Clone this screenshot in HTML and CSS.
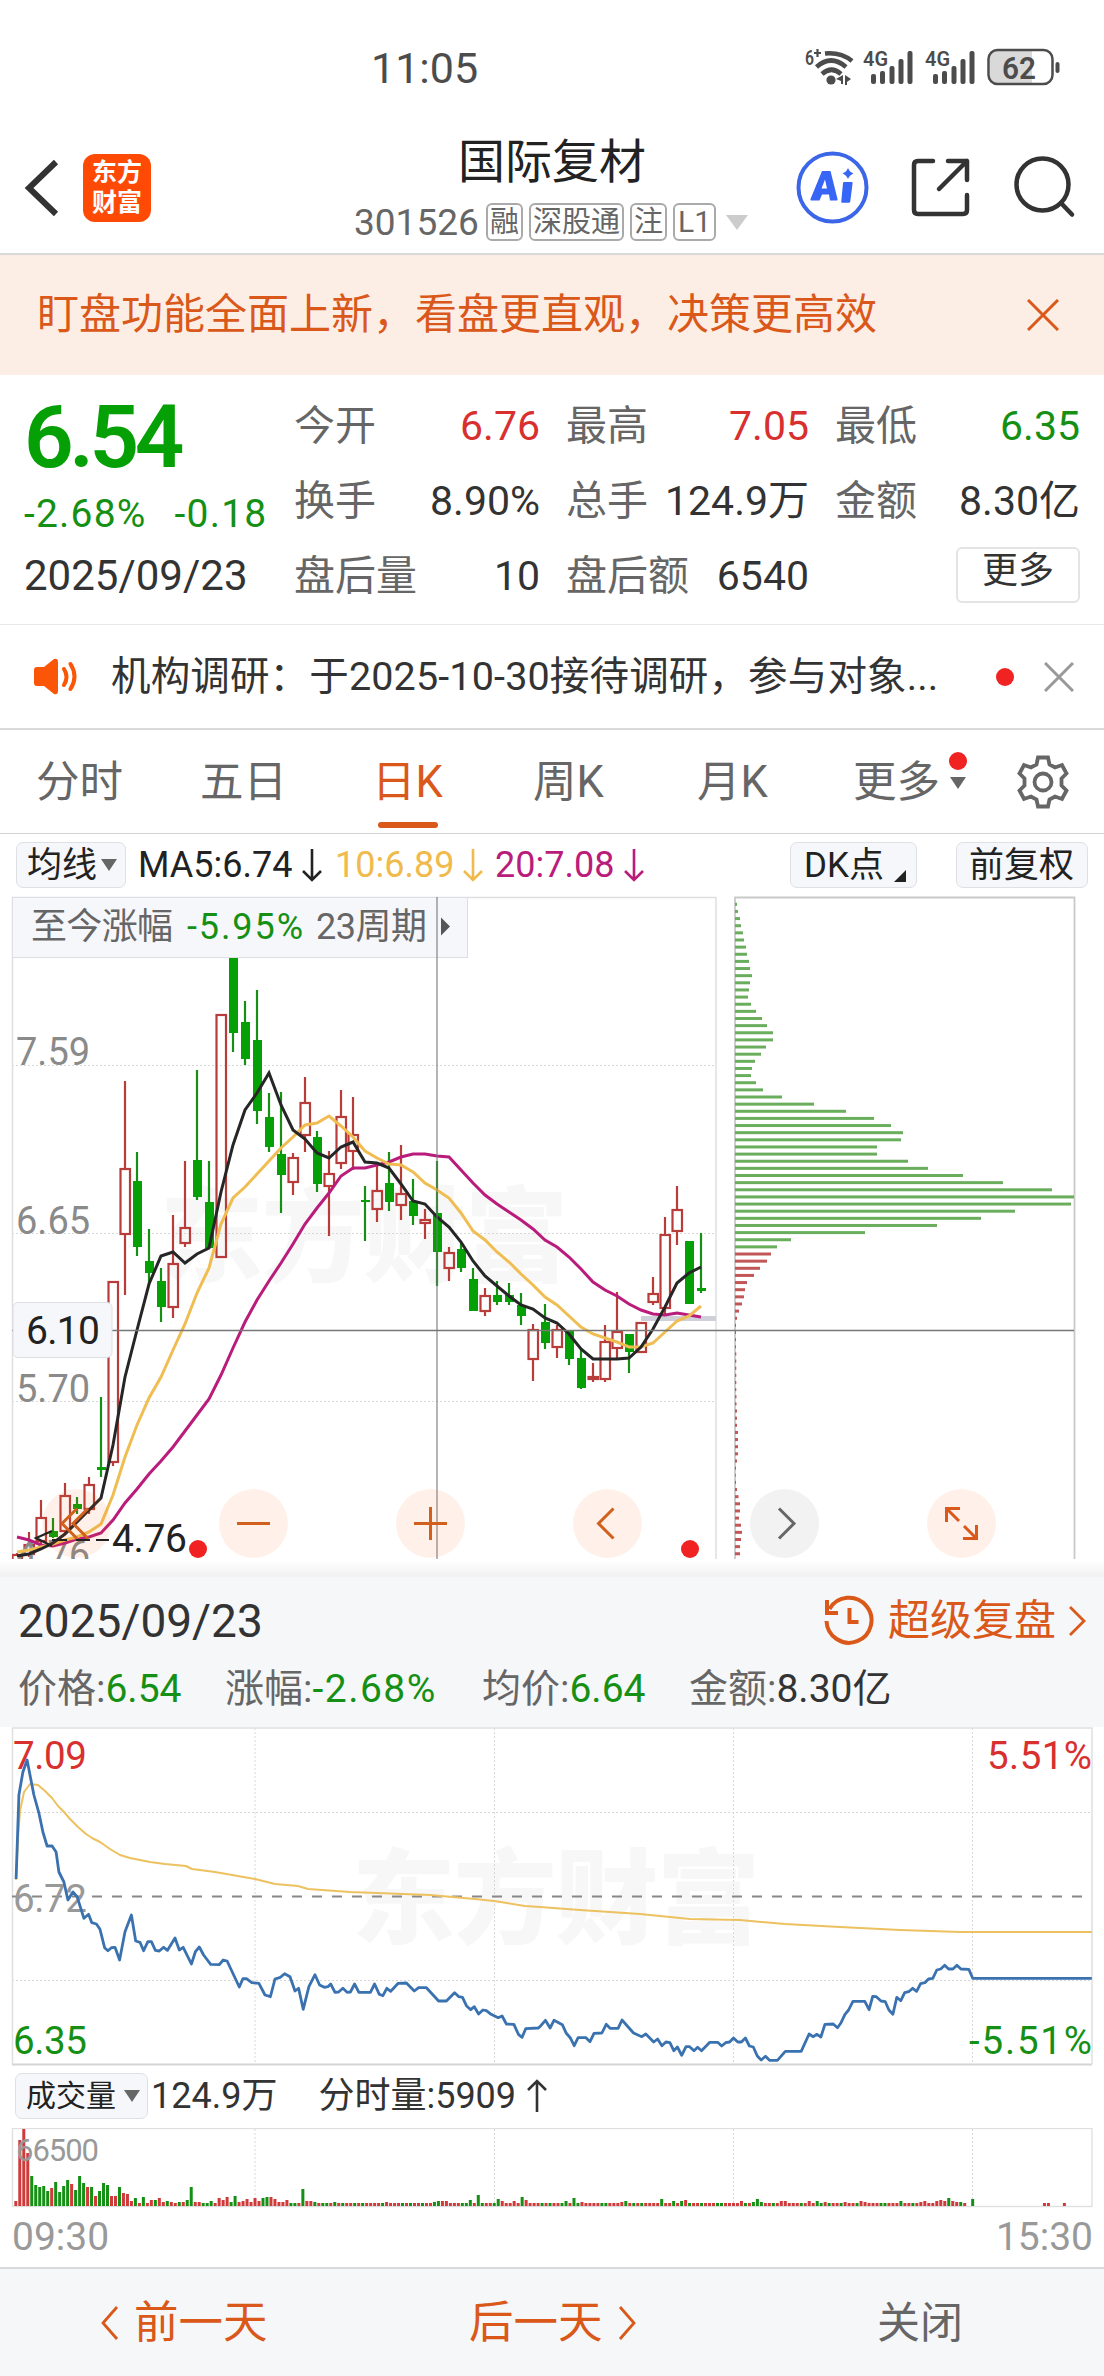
FILE: index.html
```html
<!DOCTYPE html>
<html lang="zh-CN">
  <head>
    <meta charset="utf-8">
    <link rel="stylesheet" href="styles.css">
    <title>国际复材 301526</title>
  </head>
  <body>
    <div class="status">
      <span class="clock">11:05</span>
      <svg class="status-icons" width="270" height="44" viewBox="800 46 270 44">
        <g fill="none" stroke="#4c4c4c" stroke-width="4.6">
          <path d="M825 53.500Q841 52 852 61M816.500 67Q831 54 846 67M822 74Q831.500 65.500 841 74"/>
        </g>
        <g fill="#4c4c4c">
          <circle cx="831" cy="80" r="4.600"/>
          <path d="M843 75v9h-2v-3l-5-2zM845 75l6 4-4 3v3h-2z"/>
          <text x="805" y="65" font-size="20" font-weight="600" textLength="9" lengthAdjust="spacingAndGlyphs">6</text>
          <path d="M817.500 49v8M814 53h7" stroke="#4c4c4c" stroke-width="2.200"/>
          <text x="863" y="66" font-size="20" font-weight="600" textLength="25" lengthAdjust="spacingAndGlyphs">4G</text>
          <text x="925" y="66" font-size="20" font-weight="600" textLength="25" lengthAdjust="spacingAndGlyphs">4G</text>
          <g id="signal">
            <rect x="871" y="74" width="5" height="10" rx="2"/>
            <rect x="880" y="71" width="5" height="13" rx="2"/>
            <rect x="889.500" y="66" width="5" height="18" rx="2"/>
            <rect x="898.500" y="59" width="5" height="25" rx="2"/>
            <rect x="907.500" y="51" width="5" height="33" rx="2"/>
          </g>
          <use href="#signal" x="62"/>
          <path d="M996 51h36v33h-36q-6 0-6-6v-21q0-6 6-6z" fill="#d9d9d9"/>
          <rect x="988.500" y="50" width="64" height="34" rx="9" fill="none" stroke="#4c4c4c" stroke-width="2.500"/>
          <rect x="1055.500" y="62" width="4" height="11" rx="2"/>
          <text x="1002" y="79" font-size="32" font-weight="600" textLength="34" lengthAdjust="spacingAndGlyphs">62</text>
        </g>
      </svg>
    </div>

    <header class="header">
      <svg class="back" width="36" height="60" viewBox="0 0 36 60"><path d="M32 4 5 30 32 56" fill="none" stroke="#333" stroke-width="6"/></svg>
      <div class="logo">东方<br>财富</div>
      <div class="title">
        <div class="name">国际复材</div>
        <div class="code"><span class="num">301526</span><i>融</i><i>深股通</i><i>注</i><i>L1</i><b class="caret"></b></div>
      </div>
      <svg class="header-icons" width="284" height="80" viewBox="796 148 284 80">
        <circle cx="832.500" cy="187.500" r="34" fill="none" stroke="#3c66e8" stroke-width="4"/>
        <path d="M822 171h8.500l7 28q.5 1.500-1 1.500h-6.500l-1-6h-7l-2.500 6h-8q-1.500 0-1-1.500zM825 179.500l-3.500 9h5.500z" fill="#3765f5" fill-rule="evenodd"/>
        <path d="M844 182h7.500q1.300 0 1.100 1.200l-2.300 18q-.2 1.500-1.500 1.500h-6.500q-1.300 0-1-1.500l1.700-18q0-1.200 1-1.200zM848 168q1.500 4 5.500 5.500-4 1.500-5.500 5.500-1.500-4-5.500-5.500 4-1.500 5.500-5.500z" fill="#3765f5"/>
        <g fill="none" stroke="#333" stroke-width="4.500" stroke-linecap="round" stroke-linejoin="round">
          <path d="M933 161h-15q-4 0-4 4v45q0 4 4 4h45q4 0 4-4v-15M948 161h19v19M967 161l-28 28"/>
          <circle cx="1042.500" cy="184.500" r="26"/>
          <path d="M1061 203l11 11.500"/>
        </g>
      </svg>
    </header>

    <div class="banner">
      <span>盯盘功能全面上新，看盘更直观，决策更高效</span>
      <svg width="32" height="32" viewBox="0 0 32 32"><path d="M1 1 31 31M31 1 1 31" stroke="#d9581a" stroke-width="3"/></svg>
    </div>

    <section class="quote">
      <div class="price-col">
        <div class="price">6.54</div>
        <div class="change"><span>-2.68%</span><span>-0.18</span></div>
        <div class="date">2025/09/23</div>
      </div>
      <div class="cells">
        <dl><dt>今开</dt><dd class="up">6.76</dd></dl>
        <dl><dt>最高</dt><dd class="up">7.05</dd></dl>
        <dl><dt>最低</dt><dd class="down">6.35</dd></dl>
        <dl><dt>换手</dt><dd>8.90%</dd></dl>
        <dl><dt>总手</dt><dd>124.9万</dd></dl>
        <dl><dt>金额</dt><dd>8.30亿</dd></dl>
        <dl><dt>盘后量</dt><dd>10</dd></dl>
        <dl><dt>盘后额</dt><dd>6540</dd></dl>
        <button class="more">更多</button>
      </div>
    </section>

    <div class="notice">
      <svg width="46" height="38" viewBox="33 658 46 38">
        <path d="M37 667h7l10-8q4-1 4 3v29q0 4-4 3l-10-8h-7q-3 0-3-3v-13q0-3 3-3z" fill="#fb5607"/>
        <path d="M64 669q5 8 0 16M70.500 664q8 12.500 0 25" fill="none" stroke="#fb5607" stroke-width="4" stroke-linecap="round"/>
      </svg>
      <span class="notice-text">机构调研：于2025-10-30接待调研，参与对象...</span>
      <i class="dot"></i>
      <svg width="30" height="30" viewBox="0 0 30 30"><path d="M1 1 29 29M29 1 1 29" stroke="#999" stroke-width="3"/></svg>
    </div>

    <nav class="tabs">
      <a>分时</a><a>五日</a><a class="active">日K</a><a>周K</a><a>月K</a>
      <a class="tab-more">更多<b class="caret"></b><i class="dot"></i></a>
      <svg class="gear" width="54" height="54" viewBox="-27 -27 54 54" fill="none" stroke="#666" stroke-width="3.800">
        <path d="M-5-24.500H5L6.500-17.500 12-14.500 19-17 23.500-8.500 18.500-3.500V3.500L23.500 8.500 19 17 12 14.500 6.500 17.500 5 24.500H-5L-6.500 17.500-12 14.500-19 17-23.500 8.500-18.500 3.500V-3.500L-23.500-8.500-19-17-12-14.500-6.500-17.500Z"/>
        <circle r="8.500"/>
      </svg>
    </nav>

    <div class="ma-row">
      <span class="chip">均线<b class="caret"></b></span>
      <span class="ma5">MA5:6.74</span><svg class="arrow ma5" width="22" height="34"><use href="#down"/></svg>
      <span class="ma10">10:6.89</span><svg class="arrow ma10" width="22" height="34"><use href="#down"/></svg>
      <span class="ma20">20:7.08</span><svg class="arrow ma20" width="22" height="34"><use href="#down"/></svg>
      <span class="chip dk">DK点<b class="corner"></b></span>
      <span class="chip fq">前复权</span>
    </div>

    <svg class="chart" width="1104" height="687" viewBox="0 890 1104 687">
      <defs>
        <path id="down" d="M11 1v31M2 23l9 9 9-9" fill="none" stroke="currentColor" stroke-width="2.600"/>
        <clipPath id="plot"><rect x="12" y="897" width="705" height="662"/></clipPath>
        <linearGradient id="shade" x1="0" y1="0" x2="0" y2="1"><stop offset="0" stop-color="#fff"/><stop offset="1" stop-color="#f1f1f1"/></linearGradient>
      </defs>
      <text class="watermark" x="160" y="1274" textLength="408">东方财富</text>
      <g class="grid"><path d="M12 1065.500H716M12 1233.500H716M12 1401.500H716"/></g>
      <path d="M12.500 1559V897.500H716V1559" fill="none" stroke="#dedfe1" stroke-width="1.500"/>
      <path d="M735 1559V897.500H1074.500V1559" fill="none" stroke="#c9c9c9" stroke-width="1.800"/>
      <g clip-path="url(#plot)">
        <g class="axis">
          <text x="16" y="1065">7.59</text>
          <text x="16" y="1234">6.65</text>
          <text x="16" y="1402">5.70</text>
        </g>
        <rect x="641" y="1316" width="75" height="5" fill="#cfcfd9"/>
        <g id="candles"></g>
        <g class="axis"><text x="16" y="1568">4.76</text></g>
        <g id="averages" fill="none" stroke-width="3"></g>
      </g>
      <g id="chips"></g>
      <rect x="12.500" y="897.500" width="455" height="60" fill="#f6f7fa" stroke="#dedfe3"/>
      <g font-size="36">
        <text x="31" y="939" fill="#666" textLength="142">至今涨幅</text>
        <text x="187" y="939" fill="#159015" textLength="116">-5.95%</text>
        <text x="316" y="939" fill="#666" textLength="111">23周期</text>
      </g>
      <path d="M441 917.500l9 9-9 9z" fill="#555"/>
      <path d="M437 897V1559" stroke="#777" stroke-opacity=".6" stroke-width="1.800"/>
      <path d="M12 1330.500H1074" stroke="#777" stroke-width="1.500"/>
      <rect x="13" y="1302.500" width="99" height="55" rx="5" fill="#f6f7fa" stroke="#dedfe3"/>
      <text x="26" y="1344" font-size="39" fill="#222" textLength="74">6.10</text>

      <g fill="#fa640f" fill-opacity=".09">
        <circle cx="76.500" cy="1523.500" r="34.500"/><circle cx="253.500" cy="1523.500" r="34.500"/>
        <circle cx="430.500" cy="1523.500" r="34.500"/><circle cx="607.500" cy="1523.500" r="34.500"/>
        <circle cx="961.500" cy="1523.500" r="34.500"/>
        <circle cx="784.500" cy="1523.500" r="34.500" fill="#f2f2f2" fill-opacity="1"/>
      </g>
      <g fill="none" stroke="#d0601c" stroke-width="3">
        <path d="M77 1508.500 62 1523.500 77 1538.500M88 1508.500 73 1523.500 88 1538.500"/>
        <path d="M237 1523.500h33M414 1523.500h33M430.500 1507v33"/>
        <path d="M613.500 1508.500 598.500 1523.500 613.500 1538.500"/>
        <path d="M960 1508.500H946.500V1522M947 1509l12 12M976.500 1525V1538.500H963M976 1538l-12-12" stroke="#d9581a"/>
        <path d="M779 1508.500 794 1523.500 779 1538.500" stroke="#666"/>
      </g>
      <path d="M52 1531 36 1538 52 1546M52 1540H67M76 1540H90M96 1540H109" fill="none" stroke="#222" stroke-width="2.200"/>
      <text x="112" y="1552" font-size="39" fill="#222" textLength="75">4.76</text>
      <g fill="#f02222"><circle cx="198" cy="1549" r="9"/><circle cx="690" cy="1549" r="9"/></g>
      <rect x="0" y="1560" width="1104" height="17" fill="url(#shade)"/>
    </svg>

    <section class="replay">
      <div class="replay-head">
        <span class="replay-date">2025/09/23</span>
        <svg width="52" height="52" viewBox="822 1595 52 52" fill="none" stroke="#d9581a" stroke-width="4">
          <path d="M829.500 1609A22.500 22.500 0 1 1 826.500 1621"/>
          <path d="M827 1600v13h11" />
          <path d="M849.500 1608v14h9"/>
        </svg>
        <span class="replay-link">超级复盘</span>
        <svg width="18" height="30" viewBox="0 0 18 30"><path d="M2 1 16 15 2 29" fill="none" stroke="#d9581a" stroke-width="2.800"/></svg>
      </div>
      <div class="replay-data">
        <span>价格:<em class="down">6.54</em></span>
        <span>涨幅:<em class="down wide">-2.68%</em></span>
        <span>均价:<em class="down">6.64</em></span>
        <span>金额:<em>8.30亿</em></span>
      </div>
    </section>

    <svg class="chart" width="1104" height="340" viewBox="0 1727 1104 340">
      <text class="watermark" x="352" y="1936" textLength="408">东方财富</text>
      <g class="grid"><path d="M255 1728V2065M494.500 1728V2065M733.500 1728V2065M972.500 1728V2065M12 1812.500H1092M12 1980.500H1092"/></g>
      <path d="M12.500 2064V1728H1092V2064" fill="none" stroke="#dedfe1" stroke-width="1.500"/>
      <path d="M12 2064.500H1092" stroke="#d4d4d4" stroke-width="1.800"/>
      <path d="M12 1896.500H1092" stroke="#888" stroke-width="2" stroke-dasharray="10 10"/>
      <g font-size="38.500">
        <text x="13" y="1769" fill="#d8302f" textLength="74">7.09</text>
        <text x="987" y="1769" fill="#d8302f" textLength="105">5.51%</text>
        <text x="13" y="1912" fill="#999" textLength="74">6.72</text>
        <text x="13" y="2054" fill="#159015" textLength="74">6.35</text>
        <text x="969" y="2054" fill="#159015" textLength="123">-5.51%</text>
      </g>
      <g id="intraday" fill="none" stroke-linejoin="round"></g>
    </svg>

    <div class="volume-row">
      <span class="chip vol">成交量<b class="caret"></b></span>
      <span>124.9万</span>
      <span class="minute">分时量:5909</span>
      <svg width="20" height="34" viewBox="0 0 20 34"><path d="M10 33V2M1 11l9-9 9 9" fill="none" stroke="#333" stroke-width="2.600"/></svg>
    </div>

    <svg class="chart" width="1104" height="80" viewBox="0 2128 1104 80">
      <g class="grid"><path d="M255 2129V2206M494.500 2129V2206M733.500 2129V2206M972.500 2129V2206"/></g>
      <rect x="12.500" y="2128.500" width="1079.500" height="78" fill="none" stroke="#dedfe1" stroke-width="1.300"/>
      <g id="volume"></g>
      <text x="16" y="2161" font-size="31" fill="#999" textLength="83">66500</text>
    </svg>

    <div class="times"><span>09:30</span><span>15:30</span></div>

    <footer class="footer">
      <a><svg width="18" height="34" viewBox="0 0 18 34"><path d="M16 1 2 17 16 33" fill="none" stroke="#d9581a" stroke-width="2.800"/></svg>前一天</a>
      <a>后一天<svg width="18" height="34" viewBox="0 0 18 34"><path d="M2 1 16 17 2 33" fill="none" stroke="#d9581a" stroke-width="2.800"/></svg></a>
      <a class="close">关闭</a>
    </footer>
    <script src="charts.js" charset="utf-8"></script>
  </body>
</html>
```
FILE: styles.css
```css
* {
  box-sizing: border-box;
}
body {
  margin: 0;
  width: 1104px;
  background: #fff;
  color: #333;
  font-family: Roboto, "Noto Sans CJK SC", sans-serif;
  font-size: 42px;
  line-height: 1;
  white-space: nowrap;
}
i, em {
  font-style: normal;
}
svg {
  display: block;
  flex: none;
}
.up { color: #d8302f; }
.down { color: #159015; }
.caret {
  display: inline-block;
  border: 8px solid transparent;
  border-top: 12px solid #666;
  border-bottom: 0;
}
.dot {
  width: 18px;
  height: 18px;
  border-radius: 50%;
  background: #f02222;
}

/* status bar */
.status {
  display: flex;
  justify-content: space-between;
  height: 120px;
  padding: 46px 34px 0 371px;
}
.clock {
  font-size: 43px;
  line-height: 44px;
  color: #4c4c4c;
}

/* header */
.header {
  display: flex;
  height: 135px;
  border-bottom: 2px solid #d9d9d9;
}
.back {
  margin: 38px 0 0 24px;
}
.logo {
  width: 68px;
  height: 68px;
  margin: 34px 0 0 23px;
  padding-top: 4px;
  border-radius: 12px;
  background: #ff4a05;
  color: #fff;
  font-size: 25px;
  font-weight: 700;
  line-height: 30px;
  text-align: center;
}
.title {
  width: 402px;
  margin-left: 198px;
}
.name {
  padding-left: 109px;
  font-size: 47px;
  line-height: 84px;
  color: #222;
}
.code {
  display: flex;
  align-items: center;
  height: 38px;
  padding-left: 5px;
  margin-top: -1px;
  color: #666;
}
.code .num {
  width: 132px;
  font-size: 37px;
}
.code i {
  flex: none;
  height: 38px;
  margin-right: 6px;
  padding: 0 2px;
  border: 2px solid #aaa;
  border-radius: 6px;
  font-size: 29px;
  line-height: 34px;
}
.code i:nth-of-type(4) {
  padding: 0 3px;
  font-size: 30px;
}
.code .caret {
  flex: none;
  margin-left: 4px;
  border-width: 15px 11px 0;
  border-top-color: #ccc;
}
.header-icons {
  margin: 28px 0 0 45px;
}

.banner {
  display: flex;
  align-items: center;
  justify-content: space-between;
  height: 120px;
  padding: 0 45px 0 37px;
  background: #fdeee5;
  color: #d9581a;
}

/* quote */
.quote {
  display: flex;
  height: 250px;
  border-bottom: 1px solid #e8e8e8;
}
.price-col {
  flex: none;
  width: 294px;
  padding: 19px 0 0 24px;
}
.price {
  font-size: 87px;
  font-weight: 600;
  letter-spacing: -4.500px;
  line-height: 86px;
  color: #05a005;
}
.change {
  display: flex;
  gap: 28px;
  padding-top: 14px;
  font-size: 39px;
  letter-spacing: 1.200px;
  line-height: 40px;
  color: #159015;
}
.date {
  padding-top: 20px;
  line-height: 44px;
}
.cells {
  display: grid;
  grid-template-columns: 246px 243px 245px;
  grid-auto-rows: 75px;
  column-gap: 26px;
  padding-top: 14px;
}
dl {
  display: flex;
  justify-content: space-between;
  align-items: center;
  margin: 0;
  font-size: 41px;
}
dt { color: #666; }
dd { margin: 0; }
.more {
  justify-self: end;
  align-self: center;
  width: 124px;
  height: 56px;
  margin-top: -3px;
  padding: 0 0 8px;
  border: 2px solid #e4e4e4;
  border-radius: 6px;
  background: #fff;
  color: #333;
  font: 36px Roboto, "Noto Sans CJK SC", sans-serif;
  line-height: 44px;
}

.notice {
  display: flex;
  align-items: center;
  height: 105px;
  padding: 0 30px 0 33px;
  border-bottom: 2px solid #d9d9d9;
  font-size: 39.500px;
  letter-spacing: .15px;
}
.notice-text {
  width: 884px;
  padding-left: 32px;
}
.notice .dot {
  margin: 0 auto 0 33px;
}

/* tabs */
.tabs {
  display: grid;
  grid-template-columns: 164px 172px 161px 164px 156px 162px 54px;
  height: 104px;
  padding-left: 36px;
  border-bottom: 1px solid #d4d4d4;
  font-size: 43.500px;
  line-height: 106px;
  color: #666;
}
.tabs a {
  position: relative;
}
.tabs .active {
  color: #d9581a;
}
.active::after {
  position: absolute;
  left: 6px;
  bottom: 8px;
  width: 60px;
  height: 6px;
  border-radius: 3px;
  background: #d9581a;
  content: "";
}
.tab-more .caret {
  position: absolute;
  left: 97px;
  top: 47px;
}
.tab-more .dot {
  position: absolute;
  left: 96px;
  top: 22px;
}
.gear {
  margin: 25px 0 0 1px;
}

/* indicator rows */
.ma-row {
  display: grid;
  grid-template-columns: 122px 163px 34px 127px 33px 128px 167px 166px 132px;
  align-items: center;
  height: 56px;
  padding: 8px 0 2px 16px;
  font-size: 36px;
}
.ma5 { color: #222; }
.ma10 { color: #f0ba4c; }
.ma20 { color: #b91c7b; }
.chip {
  display: flex;
  align-items: center;
  justify-self: start;
  height: 46px;
  padding: 0 8px 0 10px;
  border: 1.500px solid #dfe0e3;
  border-radius: 7px;
  background: #f6f7fa;
  color: #222;
  font-size: 35px;
}
.chip .caret {
  margin-left: 4px;
}
.dk {
  width: 127px;
  padding-left: 13px;
}
.fq {
  width: 132px;
  padding-left: 12px;
}
.corner {
  align-self: flex-end;
  margin: 0 0 5px 10px;
  border-left: 12px solid transparent;
  border-bottom: 12px solid #222;
}
.chart text {
  font-family: Roboto, "Noto Sans CJK SC", sans-serif;
}
.status-icons text {
  font-family: Roboto, sans-serif;
}
.chart .watermark {
  font-size: 103px;
  font-weight: 800;
  fill: #f7f7f7;
}
.grid path {
  fill: none;
  stroke: #d8d8d8;
  stroke-width: 1;
  stroke-dasharray: 2 2;
}
.axis {
  font-size: 38px;
  fill: #8a8a8a;
}

/* replay panel */
.replay {
  height: 150px;
  padding: 18px 19px 0 18px;
  background: #f6f7f9;
}
.replay-head {
  display: flex;
  align-items: center;
  height: 52px;
}
.replay-date {
  flex: none;
  width: 804px;
  font-size: 46px;
}
.replay-link {
  flex: none;
  width: 194px;
  padding-left: 14px;
  color: #d9581a;
}
.replay-data {
  display: grid;
  grid-template-columns: 207px 257px 207px 210px;
  padding-top: 22px;
  font-size: 39px;
  line-height: 40px;
  color: #666;
}
.replay-data em:not(.down) {
  color: #333;
}
.wide {
  letter-spacing: 1.500px;
}

.volume-row {
  display: flex;
  align-items: center;
  height: 61px;
  padding: 0 0 3px 15px;
  font-size: 36px;
}
.vol {
  width: 133px;
  margin-right: 3px;
  font-size: 30px;
}
.vol .caret {
  margin-left: 8px;
}
.minute {
  margin: 0 11px 0 41px;
}
.times {
  display: flex;
  justify-content: space-between;
  height: 59px;
  padding: 9px 11px 0 12px;
  font-size: 39px;
  line-height: 40px;
  color: #999;
}

.footer {
  display: grid;
  grid-template-columns: 368px 408px 328px;
  height: 109px;
  border-top: 2px solid #d9d9d9;
  background: #f6f7f9;
  font-size: 44.500px;
  line-height: 106px;
}
.footer a {
  display: flex;
  align-items: center;
  gap: 15px;
  padding-left: 101px;
  color: #d9581a;
}
.footer .close {
  color: #666;
  font-size: 43px;
}
```
FILE: charts.js
```js
const NS = 'http://www.w3.org/2000/svg'
const GREEN = '#05a005'
const RED = '#b83c3a'

const add = (parent, tag, attrs) => {
  const el = document.createElementNS(NS, tag)
  Object.keys(attrs).forEach(key => el.setAttribute(key, attrs[key]))
  document.getElementById(parent).appendChild(el)
}

// direction, high, body top, body bottom, low
const candles = [
  ['r',1553,1554,1562,1562],['r',1532,1544,1555,1557],['r',1500,1517,1542,1545],['g',1518,1531,1537,1538],
  ['r',1483,1495,1532,1535],['g',1497,1504,1509,1514],['r',1477,1484,1510,1514],['g',1397,1467,1470,1477],
  ['r',1281,1281,1463,1466],['r',1081,1168,1235,1295],['g',1152,1181,1247,1256],['g',1229,1261,1273,1284],
  ['g',1268,1281,1307,1322],['r',1215,1263,1308,1318],['r',1161,1227,1244,1247],['g',1070,1160,1197,1200],
  ['g',1161,1202,1248,1248],['r',1014,1014,1258,1258],['g',930,940,1033,1052],['g',1001,1022,1059,1065],
  ['g',990,1040,1111,1124],['g',1093,1117,1147,1152],['g',1092,1154,1175,1213],['r',1153,1157,1183,1195],
  ['r',1077,1102,1136,1152],['g',1131,1137,1184,1192],['r',1151,1173,1187,1236],['r',1090,1116,1164,1169],
  ['r',1097,1134,1152,1170],['g',1186,1200,1202,1241],['r',1165,1190,1210,1222],['g',1152,1183,1202,1211],
  ['r',1145,1193,1206,1220],['g',1179,1201,1216,1225],['r',1209,1219,1224,1239],['g',1161,1213,1252,1286],
  ['r',1247,1252,1269,1281],['g',1243,1249,1268,1272],['g',1268,1279,1311,1311],['r',1288,1295,1312,1316],
  ['g',1281,1295,1302,1305],['g',1283,1295,1302,1305],['g',1293,1305,1316,1325],['r',1324,1329,1360,1381],
  ['g',1304,1322,1343,1349],['r',1325,1329,1348,1358],['g',1331,1331,1359,1365],['g',1350,1358,1388,1389],
  ['r',1363,1376,1380,1382],['r',1325,1341,1380,1382],['r',1292,1331,1349,1358],['g',1334,1334,1352,1373],
  ['r',1322,1322,1353,1353],['r',1277,1293,1303,1305],['r',1217,1234,1309,1314],['r',1186,1209,1232,1245],
  ['g',1241,1241,1304,1304],['g',1233,1288,1291,1293]
]
candles.forEach(([dir, high, top, bottom, low], i) => {
  const x = 17 + 12 * i
  if (dir === 'g') {
    add('candles', 'path', { d: `M${x} ${high}V${low}`, stroke: '#159015', 'stroke-width': 2.2 })
    add('candles', 'rect', { x: x - 4, y: top, width: 9, height: bottom - top, fill: GREEN })
  } else {
    add('candles', 'path', { d: `M${x} ${high}V${top}M${x} ${bottom}V${low}`, stroke: RED, 'stroke-width': 2.2 })
    add('candles', 'rect', { x: x - 4.5, y: top + 1, width: 9.5, height: Math.max(bottom - top - 2, 1), fill: 'none', stroke: RED, 'stroke-width': 2.2 })
  }
})

const averages = {
  '#b91c7b': [1537,1540,1545,1546,1543,1539,1537,1533,1520,1503,1489,1474,1461,1447,1431,1415,1399,1375,1348,1322,1300,1281,1263,1244,1224,1208,1193,1176,1168,1168,1165,1162,1157,1154,1154,1156,1157,1170,1183,1195,1204,1212,1220,1229,1240,1247,1257,1269,1282,1290,1296,1304,1310,1314,1315,1313,1315,1317],
  '#f0bd52': [1552,1550,1547,1544,1540,1537,1532,1524,1495,1457,1425,1398,1377,1350,1324,1293,1268,1224,1198,1187,1174,1161,1148,1137,1125,1123,1116,1126,1137,1151,1158,1164,1165,1172,1183,1190,1198,1213,1231,1240,1252,1262,1274,1285,1297,1305,1316,1327,1334,1338,1342,1347,1347,1343,1332,1321,1316,1306],
  '#262626': [1556,1554,1549,1543,1534,1522,1510,1498,1445,1377,1330,1284,1256,1252,1263,1254,1248,1192,1145,1110,1093,1073,1105,1130,1139,1153,1158,1147,1142,1162,1163,1168,1184,1201,1204,1217,1227,1242,1261,1276,1286,1296,1305,1309,1318,1323,1334,1349,1359,1359,1359,1358,1347,1329,1307,1283,1273,1267]
}
Object.keys(averages).forEach(color => {
  add('averages', 'polyline', { stroke: color, points: averages[color].map((y, i) => `${17 + 12 * i},${y}`).join(' ') })
})

// cost distribution, green above the last price and red below
const chips = [2,3,5,6,8,9,11,12,14,15,17,15,14,13,16,21,27,32,38,38,31,26,20,17,16,21,28,47,79,111,139,156,168,166,142,142,173,193,228,268,317,339,336,280,246,202,130,56,42,36,32,25,19,12,10,9,7,4,2,1,1,1,1,1.3,1.3,1.3,1.3,1.3,1.3,1.5,1.5,2,2,2,3,3,3,3,2,1,.7,1,2,3.5,5,5,4,6,7,6,5,5]
chips.forEach((width, i) => {
  add('chips', 'rect', { x: 735, y: 902.8 + 7.137 * i, width, height: 3, fill: i < 49 ? '#6aae5d' : '#c25757' })
})

// intraday average and price
add('intraday', 'polyline', { stroke: '#edc15f', 'stroke-width': 2, points: '16,1880 18,1838 20,1811 24,1792 30,1784 38,1785 45,1791 52,1798 58,1806 64,1812 70,1819 78,1827 86,1834 92,1838 100,1842 110,1849 120,1855 130,1858 150,1862 165,1864 186,1866 192,1869 215,1872 255,1879 275,1884 298,1886 308,1889 350,1892 430,1895 475,1899 494,1901 525,1906 540,1907 580,1910 640,1914 690,1919 740,1920 785,1924 840,1927 900,1930 960,1932 1092,1932' })
const morning = [45,-3,53,-255,64,-324,76,-360,84,-315,95,-255,109,-201,120,-144,132,-102,146,-102,157,-84,165,-24,179,6,190,60,204,36,216,50,235,115,248,103,257,128,270,132,280,148,293,203,302,212,312,203,322,202,335,240,350,155,368,105,380,183,392,187,402,212,414,185,424,185,435,211,446,213,458,202,469,211,490,174,502,210,513,202,536,252,547,215,558,201,570,225,590,253,614,254,625,240,636,243,670,321,680,296,690,296,705,308,725,310,742,345,757,350,770,297,785,292,797,281,812,290,826,333,836,325,849,388,865,320,882,284,895,315,908,322,918,320,926,312,938,337,948,336,960,325,972,337,981,336,993,312,1005,337,1037,337,1049,312,1062,343,1072,347,1083,325,1094,334,1115,310,1138,309,1160,333,1172,323,1194,323,1228,363,1250,363,1273,338,1285,350,1295,352,1306,377,1318,389,1328,380,1340,402,1352,390,1362,392,1375,403,1395,413,1406,408,1418,432,1439,433,1452,464,1462,472,1472,446,1507,444]
const afternoon = [0,440,15,421,28,444,39,421,62,434,73,460,84,473,95,497,106,473,128,473,139,485,150,460,172,459,184,433,195,445,217,445,228,420,260,459,283,470,294,462,316,486,327,477,339,497,350,486,361,488,372,512,382,501,394,526,406,500,416,500,428,512,438,502,449,512,472,487,494,487,505,498,516,488,527,486,538,474,550,486,560,486,571,474,582,498,593,501,604,528,615,540,627,529,638,541,660,541,682,514,726,514,748,462,759,470,770,463,781,471,792,433,815,432,827,443,836,430,848,403,858,390,870,364,903,364,915,389,925,349,935,350,948,363,960,365,970,390,981,403,992,352,1003,362,1014,338,1025,335,1036,325,1047,334,1058,311,1070,308,1080,297,1092,295,1103,270,1114,267,1125,256,1136,267,1148,267,1159,256,1170,267,1192,268,1203,295,1534,295]
const toPoints = (data, x0, scale) => {
  const points = []
  for (let i = 0; i < data.length; i += 2) {
    points.push(`${(x0 + data[i] / scale).toFixed(1)},${(1880 + data[i + 1] / 3).toFixed(1)}`)
  }
  return points
}
add('intraday', 'polyline', {
  stroke: '#3a72b0',
  'stroke-width': 2.8,
  points: toPoints(morning, 0, 2.8).concat(toPoints(afternoon, 540, 2.78)).join(' ')
})

// minute volume
const opening = 'r5 r66 r77 r53 g30 g21 g19 g20 g15 r18 g24 g14 g20 g26 r22 g16 g30 g23 r19 g19 r10 g15 g23 g21 r10 r10 g19 r13 r12 r5 g8 r3 g9 r3 r6 g6 r8 r4 g5 r4 r3 g4 r4 g6 g19 r4 r4 g3 g3 g5 r3 r8 r6 r9 g4 g10 r4 r5 r7 r4 r8 r5 g8 g9 r9 r7 r4 r4 r6 g3 g3 r3 g17 r5 r5 g4'.split(' ')
const peaks = { 80:'g4',93:'r4',105:'g4',106:'g5',107:'r5',108:'r5',114:'g6',116:'g11',121:'g7',122:'r5',125:'r5',127:'g9',128:'r6',138:'g5',140:'g8',142:'r4',152:'r4',153:'g5',162:'g7',165:'g5',167:'g5',168:'r6',182:'r5',185:'g4',186:'g7',187:'g4',192:'r5',193:'r5',199:'r5',201:'g5',203:'r4',208:'r4',212:'r5',213:'r4',222:'g5',227:'r4',228:'r5',231:'r5',232:'r6',233:'r5',234:'g8',235:'r5',236:'r4',237:'g4',240:'g7',258:'r3',259:'r3',263:'r3' }
for (let i = 0; i < 264; i++) {
  let bar = opening[i] || peaks[i]
  if (!bar && i > 238) continue
  if (!bar) bar = i % 5 === 2 || i % 7 === 1 ? 'g3' : 'r3'
  const height = Number(bar.slice(1))
  add('volume', 'rect', { x: 14.3 + 3.987 * i, y: 2206 - height, width: 3, height, fill: bar[0] === 'g' ? '#159015' : '#cf3a3a' })
}
```
